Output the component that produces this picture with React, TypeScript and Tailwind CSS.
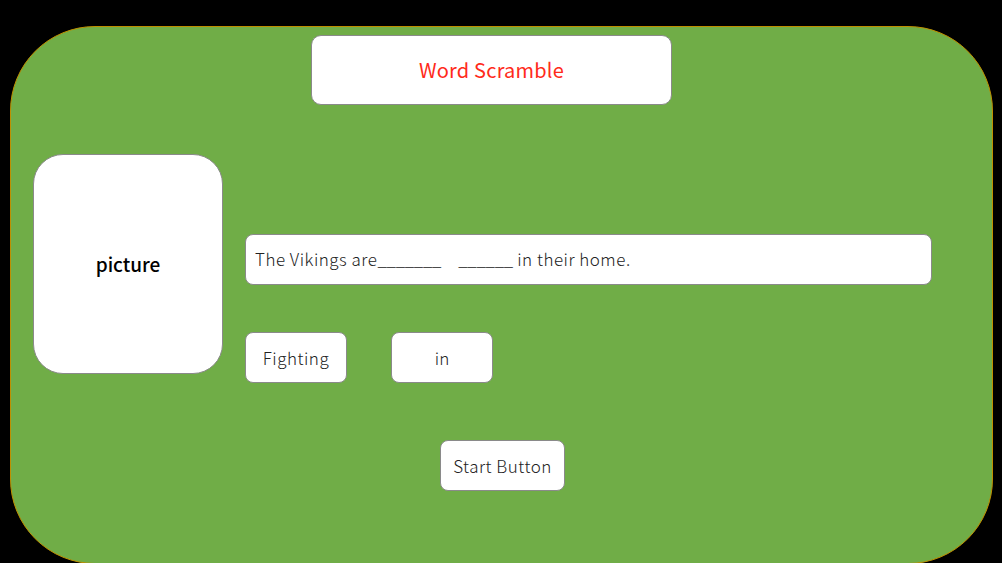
export default function App() {
  const font = { fontFamily: '"Noto Sans CJK SC", "Noto Sans", sans-serif' };

  return (
    <div className="w-[1002px] h-[563px] bg-black overflow-hidden pt-[26px] pl-[10px]" style={font}>
      <div className="w-[983px] h-[538px] bg-[#70ad47] border border-[#bf8f00] rounded-[85px] flex flex-col">
        <div className="ml-[300px] mt-[8px] w-[361px] h-[70px] bg-white border border-[#8a8a8a] rounded-[10px] flex items-center justify-center">
          <span className="text-[20px] text-[#ff2a1a] tracking-[0.2px]">Word Scramble</span>
        </div>

        <div className="flex mt-[49px] ml-[22px]">
          <div className="w-[190px] h-[220px] bg-white border border-[#8a8a8a] rounded-[30px] flex items-center justify-center">
            <span className="text-[19px] font-medium text-black">picture</span>
          </div>

          <div className="ml-[22px] mt-[80px] flex flex-col">
            <div className="w-[687px] h-[51px] bg-white border border-[#8a8a8a] rounded-[8px] flex items-center pl-[9px] pb-[1px]">
              <span className="text-[17px] font-light text-[#222] tracking-[0.5px] whitespace-pre">
                The Vikings are<span className="tracking-[-0.3px]">_______</span>{'    '}
                <span className="tracking-[-0.3px]">______</span> in their home.
              </span>
            </div>

            <div className="flex gap-[44px] mt-[47px]">
              <div className="w-[102px] h-[51px] bg-white border border-[#8a8a8a] rounded-[8px] flex items-center justify-center">
                <span className="text-[17px] font-light text-[#222] tracking-[0.5px]">Fighting</span>
              </div>
              <div className="w-[102px] h-[51px] bg-white border border-[#8a8a8a] rounded-[8px] flex items-center justify-center">
                <span className="text-[17px] font-light text-[#222]">in</span>
              </div>
            </div>
          </div>
        </div>

        <div className="ml-[429px] mt-[57px] w-[125px] h-[51px] bg-white border border-[#8a8a8a] rounded-[8px] flex items-center justify-center">
          <span className="text-[17px] font-light text-[#222] tracking-[0.5px]">Start Button</span>
        </div>
      </div>
    </div>
  );
}
